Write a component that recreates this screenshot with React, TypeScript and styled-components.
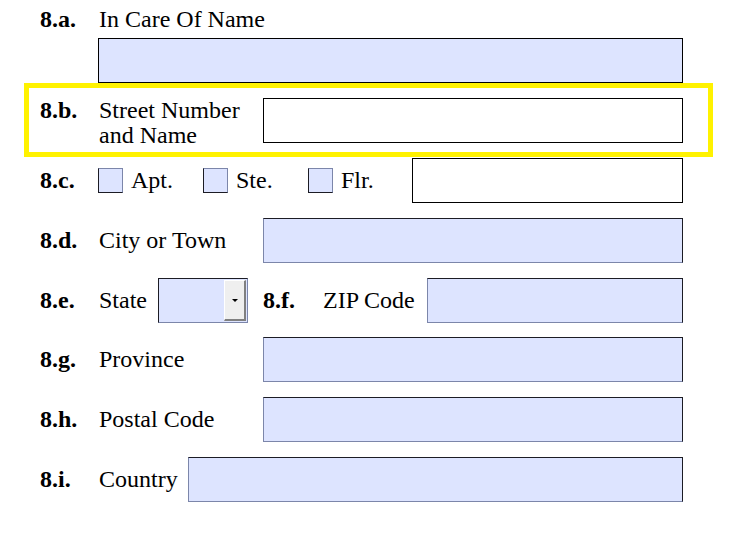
import React from "react";
import styled, { createGlobalStyle } from "styled-components";

const GlobalStyle = createGlobalStyle`
  html, body {
    margin: 0;
    padding: 0;
    background: #ffffff;
    font-family: 'Liberation Serif', 'Times New Roman', serif;
  }
  * {
    box-sizing: border-box;
  }
`;

const Page = styled.div`
  width: 736px;
  height: 537px;
  overflow: hidden;
  background: #ffffff;
  color: #000000;
  font-family: 'Liberation Serif', 'Times New Roman', serif;
  font-size: 24px;
`;

const Row = styled.div<{ $gap?: number; $height?: number; $top?: number }>`
  display: flex;
  align-items: center;
  width: 643px;
  height: ${(p) => p.$height ?? 45}px;
  padding-top: ${(p) => p.$top ?? 0}px;
  margin-left: 40px;
  margin-top: ${(p) => p.$gap ?? 0}px;
`;

const Num = styled.span<{ $width?: number; $lead?: number; $line?: number }>`
  flex: none;
  width: ${(p) => p.$width ?? 59}px;
  margin-left: ${(p) => p.$lead ?? 0}px;
  margin-bottom: 2px;
  font-weight: bold;
  line-height: ${(p) => p.$line ?? 24}px;
  white-space: nowrap;
`;

const Label = styled.span<{ $width?: number }>`
  flex: none;
  width: ${(p) => (p.$width ? `${p.$width}px` : "auto")};
  margin-bottom: 2px;
  line-height: 24px;
  white-space: nowrap;
`;

const Field = styled.div<{ $white?: boolean; $dark?: boolean; $width?: number; $indent?: number }>`
  flex: ${(p) => (p.$width ? "none" : "1")};
  width: ${(p) => (p.$width ? `${p.$width}px` : "auto")};
  height: 45px;
  margin-left: ${(p) => p.$indent ?? 0}px;
  background: ${(p) => (p.$white ? "#ffffff" : "#dde4ff")};
  border: 1px solid;
  border-color: ${(p) =>
    p.$white || p.$dark ? "#000000" : "#1c1c24 #1c1c24 #7c86aa #7c86aa"};
`;

const Highlight = styled.div`
  display: flex;
  align-items: flex-start;
  width: 689px;
  height: 74px;
  margin-left: 24px;
  padding: 10px 25px 0 11px;
  border: 5px solid #fff200;
`;

const TwoLine = styled.div`
  flex: none;
  width: 164px;
  line-height: 25px;
  white-space: nowrap;
`;

const Options = styled.div`
  flex: 1;
  display: flex;
  align-items: center;
  margin-left: -1px;
`;

const Option = styled.label<{ $width?: number }>`
  display: flex;
  align-items: center;
  gap: 8px;
  width: ${(p) => (p.$width ? `${p.$width}px` : "auto")};
`;

const Box = styled.span`
  flex: none;
  width: 25px;
  height: 25px;
  background: #dde4ff;
  border: 1px solid;
  border-color: #7c86aa #7c86aa #1c1c24 #1c1c24;
`;

const Select = styled.div`
  flex: none;
  display: flex;
  justify-content: flex-end;
  align-items: stretch;
  width: 90px;
  height: 45px;
  padding: 1px 1px 1px 0;
  background: #dde4ff;
  border: 1px solid;
  border-color: #1c1c24 #7c86aa #7c86aa #1c1c24;
`;

const DropButton = styled.span`
  display: flex;
  align-items: center;
  justify-content: center;
  width: 22px;
  background: #efefef;
  border-style: solid;
  border-width: 1px 2px 2px 1px;
  border-color: #ffffff #808080 #808080 #ffffff;

  &::after {
    content: "";
    width: 0;
    height: 0;
    border-left: 3px solid transparent;
    border-right: 3px solid transparent;
    border-top: 3px solid #000000;
  }
`;

const App = () => {
  return (
    <Page>
      <GlobalStyle />
      <Row $height={38} $top={2}>
        <Num>8.a.</Num>
        <Label>In Care Of Name</Label>
      </Row>
      <Row>
        <Field $dark $indent={58} />
      </Row>

      <Highlight>
        <Num $line={25}>8.b.</Num>
        <TwoLine>
          Street Number
          <br />
          and Name
        </TwoLine>
        <Field $white />
      </Highlight>

      <Row $gap={1}>
        <Num>8.c.</Num>
        <Options>
          <Option $width={105}>
            <Box />
            <Label>Apt.</Label>
          </Option>
          <Option $width={105}>
            <Box />
            <Label>Ste.</Label>
          </Option>
          <Option>
            <Box />
            <Label>Flr.</Label>
          </Option>
        </Options>
        <Field $white $width={271} />
      </Row>

      <Row $gap={15}>
        <Num>8.d.</Num>
        <Label $width={164}>City or Town</Label>
        <Field />
      </Row>

      <Row $gap={15}>
        <Num>8.e.</Num>
        <Label $width={59}>State</Label>
        <Select>
          <DropButton />
        </Select>
        <Num $width={60} $lead={15}>
          8.f.
        </Num>
        <Label $width={104}>ZIP Code</Label>
        <Field />
      </Row>

      <Row $gap={14}>
        <Num>8.g.</Num>
        <Label $width={164}>Province</Label>
        <Field />
      </Row>

      <Row $gap={15}>
        <Num>8.h.</Num>
        <Label $width={164}>Postal Code</Label>
        <Field />
      </Row>

      <Row $gap={15}>
        <Num>8.i.</Num>
        <Label $width={89}>Country</Label>
        <Field />
      </Row>
    </Page>
  );
};

export default App;
